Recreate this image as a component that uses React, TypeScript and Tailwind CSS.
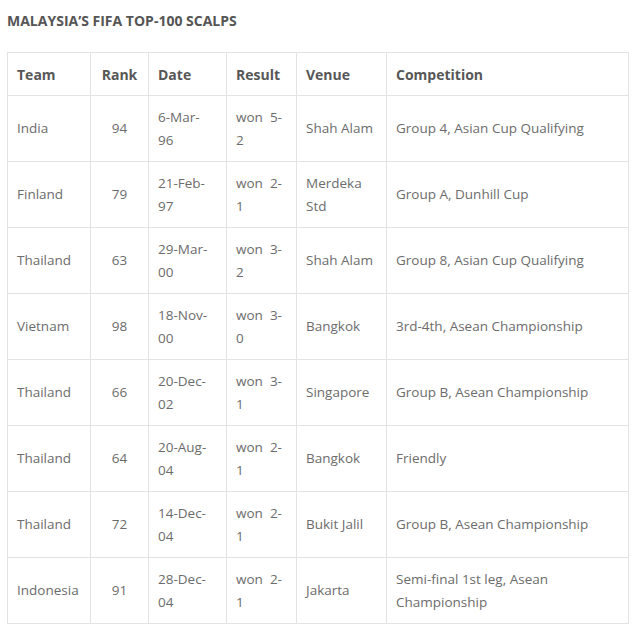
const rows = [
  { team: 'India', rank: '94', date: ['6-Mar-', '96'], result: ['won\u00a0 5-', '2'], venue: ['Shah Alam'], comp: ['Group 4, Asian Cup Qualifying'] },
  { team: 'Finland', rank: '79', date: ['21-Feb-', '97'], result: ['won\u00a0 2-', '1'], venue: ['Merdeka', 'Std'], comp: ['Group A, Dunhill Cup'] },
  { team: 'Thailand', rank: '63', date: ['29-Mar-', '00'], result: ['won\u00a0 3-', '2'], venue: ['Shah Alam'], comp: ['Group 8, Asian Cup Qualifying'] },
  { team: 'Vietnam', rank: '98', date: ['18-Nov-', '00'], result: ['won\u00a0 3-', '0'], venue: ['Bangkok'], comp: ['3rd-4th, Asean Championship'] },
  { team: 'Thailand', rank: '66', date: ['20-Dec-', '02'], result: ['won\u00a0 3-', '1'], venue: ['Singapore'], comp: ['Group B, Asean Championship'] },
  { team: 'Thailand', rank: '64', date: ['20-Aug-', '04'], result: ['won\u00a0 2-', '1'], venue: ['Bangkok'], comp: ['Friendly'] },
  { team: 'Thailand', rank: '72', date: ['14-Dec-', '04'], result: ['won\u00a0 2-', '1'], venue: ['Bukit Jalil'], comp: ['Group B, Asean Championship'] },
  { team: 'Indonesia', rank: '91', date: ['28-Dec-', '04'], result: ['won\u00a0 2-', '1'], venue: ['Jakarta'], comp: ['Semi-final 1st leg, Asean', 'Championship'] },
]

function Lines({ parts }: { parts: string[] }) {
  return (
    <>
      {parts.map((p, i) => (
        <span key={i}>
          {i > 0 && <br />}
          {p}
        </span>
      ))}
    </>
  )
}

export default function App() {
  const cell = 'border border-[#e3e3e3] px-[9px] align-middle whitespace-nowrap'
  return (
    <div className="min-h-screen bg-white px-[7px] pt-[11px] font-['Open_Sans',sans-serif] text-[13.5px] leading-[23px] text-[#6c6c6c]">
      <h2 className="text-[14px] font-bold leading-[20px] text-[#555555]">
        MALAYSIA’S FIFA TOP-100 SCALPS
      </h2>

      <table className="mt-[21px] w-[621px] table-fixed border-collapse">
        <colgroup>
          <col className="w-[83px]" />
          <col className="w-[58px]" />
          <col className="w-[78px]" />
          <col className="w-[70px]" />
          <col className="w-[90px]" />
          <col className="w-[242px]" />
        </colgroup>
        <thead>
          <tr className="h-[43px] text-[14px] font-semibold text-[#575757]">
            <th className={`${cell} text-left`}>Team</th>
            <th className={`${cell} text-center`}>Rank</th>
            <th className={`${cell} text-left`}>Date</th>
            <th className={`${cell} text-left`}>Result</th>
            <th className={`${cell} text-left`}>Venue</th>
            <th className={`${cell} text-left`}>Competition</th>
          </tr>
        </thead>
        <tbody>
          {rows.map((r, i) => (
            <tr key={i} className="h-[66px]">
              <td className={cell}>{r.team}</td>
              <td className={`${cell} text-center`}>{r.rank}</td>
              <td className={cell}><Lines parts={r.date} /></td>
              <td className={cell}><Lines parts={r.result} /></td>
              <td className={cell}><Lines parts={r.venue} /></td>
              <td className={cell}><Lines parts={r.comp} /></td>
            </tr>
          ))}
        </tbody>
      </table>
    </div>
  )
}
